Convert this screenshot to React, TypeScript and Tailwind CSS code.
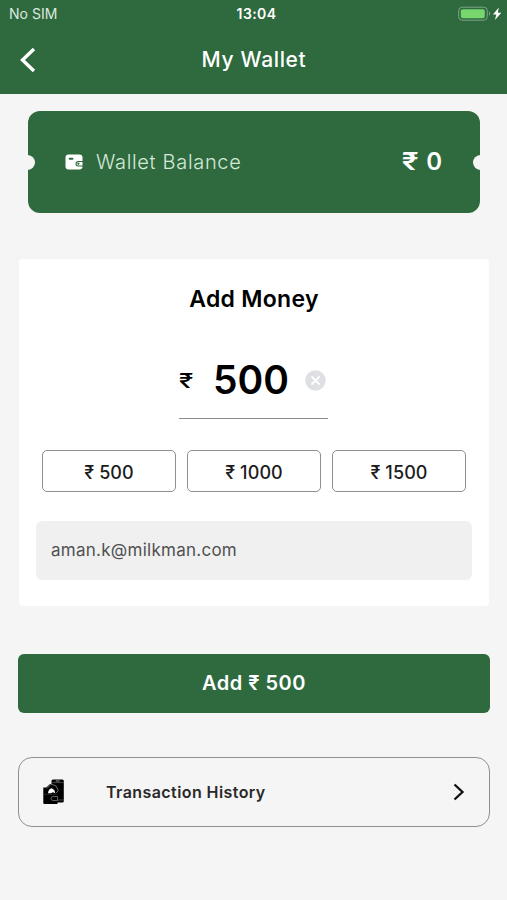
import { useState } from "react"

const presets = [500, 1000, 1500]

function BatteryIcon() {
  return (
    <svg width="44" height="16" viewBox="0 0 44 16" fill="none">
      <rect x="0.7" y="1.2" width="28.6" height="13" rx="3.6" stroke="#7da588" strokeWidth="1" />
      <rect x="2.8" y="3.2" width="24" height="9" rx="2" fill="#77d66c" />
      <path d="M31 5.6c1.6.6 1.6 3.6 0 4.2z" fill="#7da588" />
      <path d="M40.8 1.600 35 8.400h3.300l-1.300 5.600 6.300-7.300h-3.500z" fill="#fff" />
    </svg>
  )
}

function WalletIcon() {
  return (
    <svg width="18" height="16" viewBox="0 0 18 16" fill="none">
      <rect x="0.5" y="0.5" width="17" height="15" rx="3" fill="#fff" />
      <rect x="3.7" y="3.7" width="4.8" height="2" rx="1" fill="#2e6a3e" />
      <path d="M18 7h-4.8a2.7 2.7 0 0 0 0 5.4H18z" fill="#2e6a3e" />
      <path d="M17.5 8h-4.2a1.7 1.7 0 0 0 0 3.4h4.2z" fill="#fff" />
      <circle cx="13.4" cy="9.7" r="1.1" fill="#2e6a3e" />
    </svg>
  )
}

function HistoryIcon() {
  return (
    <svg width="22" height="26" viewBox="0 0 22 26" fill="none">
      <rect x="8.5" y="0.5" width="12.3" height="23" rx="1.5" fill="#000" />
      <path d="M9 3.6h11.8M14 21h6.8" stroke="#777" strokeWidth="0.6" />
      <path d="M12.7 2h4" stroke="#aaa" strokeWidth="0.9" />
      <path d="M0.3 8.5h3L7 5h5l2.5 3.5V25H1.3a1 1 0 0 1-1-1z" fill="#000" />
      <path d="M4 9.5 8 5.2l5 1.6 2.2 4.8-2 2.4" stroke="#999" strokeWidth="0.7" />
      <path d="M5 14.2c.3-2.8 1.600-4.700 3.700-5l2.600 1.700 1 3.300-2.400-1-2 1z" fill="#fff" />
      <path d="M0.3 15.3h13.5" stroke="#444" strokeWidth="0.6" />
      <path d="M14.5 17.5H10a2 2 0 0 0 0 4h4.5z" stroke="#888" strokeWidth="0.7" fill="#000" />
    </svg>
  )
}

export default function App() {
  const [amount, setAmount] = useState(500)

  return (
    <div className="flex h-[900px] w-[507px] flex-col overflow-hidden bg-[#f5f5f5] font-['Inter','Liberation_Sans',sans-serif] text-black">
      <header className="h-[94px] bg-[#2e6a3e] text-white">
        <div className="grid h-7 grid-cols-3 items-center pr-[5px] pl-[9px] text-sm">
          <span className="tracking-[0.05px] text-[#dce8df]">No SIM</span>
          <span className="pl-[2px] text-center font-semibold tracking-[0.4px]">13:04</span>
          <span className="flex justify-end">
            <BatteryIcon />
          </span>
        </div>
        <div className="grid h-[63px] grid-cols-[60px_1fr_60px] items-center">
          <button className="pl-[19px]" aria-label="Back">
            <svg width="17" height="26" viewBox="0 0 17 26" fill="none">
              <path d="M15 2 3.5 13 15 24" stroke="#fff" strokeWidth="3.4" />
            </svg>
          </button>
          <h1 className="pl-px text-center text-[21px] font-medium tracking-[0.65px]">My Wallet</h1>
        </div>
      </header>

      <section className="mx-7 mt-[17px] flex h-[102px] w-[452px] shrink-0 items-center overflow-hidden rounded-xl bg-[#2e6a3e] text-white">
        <span className="-ml-2 size-[15px] rounded-full bg-[#f5f5f5]" />
        <span className="ml-[30px]">
          <WalletIcon />
        </span>
        <span className="ml-[13px] text-[20px] font-light tracking-[0.68px] text-[#d6e8da]">Wallet Balance</span>
        <span className="mr-[31px] ml-auto flex gap-[8px] text-[24px] font-semibold">
          <span className="origin-right scale-x-125">₹</span>
          <span>0</span>
        </span>
        <span className="-mr-2 size-[15px] rounded-full bg-[#f5f5f5]" />
      </section>

      <section className="mt-[46px] ml-[19px] flex h-[347px] w-[470px] shrink-0 flex-col rounded bg-white px-[17px]">
        <h2 className="mt-6 text-center text-[23px] leading-8 font-semibold tracking-[0.3px]">Add Money</h2>

        <div className="mt-[26px] ml-[143px] flex h-[78px] w-[149px] items-center border-b border-[#8c8c8c] pt-[2px]">
          <span className="origin-left scale-x-130 text-[20px] font-medium">₹</span>
          <span className="ml-[23px] text-[39px] font-semibold">{amount}</span>
          <button className="mr-[2px] ml-auto" aria-label="Clear" onClick={() => setAmount(0)}>
            <svg width="21" height="21" viewBox="0 0 21 21" fill="none">
              <circle cx="10.5" cy="10.5" r="10.2" fill="#dfe0e4" />
              <path d="m6.5 6.5 8 8m0-8-8 8" stroke="#fff" strokeWidth="1.8" />
            </svg>
          </button>
        </div>

        <div className="mt-[31px] flex gap-[11px] px-[6px]">
          {presets.map((value) => (
            <button
              key={value}
              className="h-[42px] w-[134px] rounded-[5px] border border-[#8f8f8f] pt-[2px] text-[18px] font-medium tracking-[0.1px] text-[#1c1c1c]"
              onClick={() => setAmount(value)}
            >
              ₹ {value}
            </button>
          ))}
        </div>

        <div className="mt-[29px] flex h-[59px] w-[436px] items-center rounded-md bg-[#f0f0f0] px-[15px] text-[17px] tracking-[0.26px] text-[#505050]">
          aman.k@milkman.com
        </div>
      </section>

      <button className="mt-12 ml-[18px] h-[59px] w-[472px] shrink-0 rounded-md bg-[#2e6a3e] pb-[2px] text-[20px] font-semibold tracking-[0.5px] text-white">
        Add ₹ {amount}
      </button>

      <button className="mt-11 ml-[18px] flex h-[70px] w-[472px] shrink-0 items-center rounded-[14px] border border-[#8f8f8f] px-6 text-[#292929]">
        <HistoryIcon />
        <span className="ml-[41px] text-[16px] font-semibold tracking-[0.42px]">Transaction History</span>
        <svg className="ml-auto" width="12" height="18" viewBox="0 0 12 18" fill="none">
          <path d="m1.5 1.5 8 7.5-8 7.5" stroke="#111" strokeWidth="2.3" />
        </svg>
      </button>
    </div>
  )
}
